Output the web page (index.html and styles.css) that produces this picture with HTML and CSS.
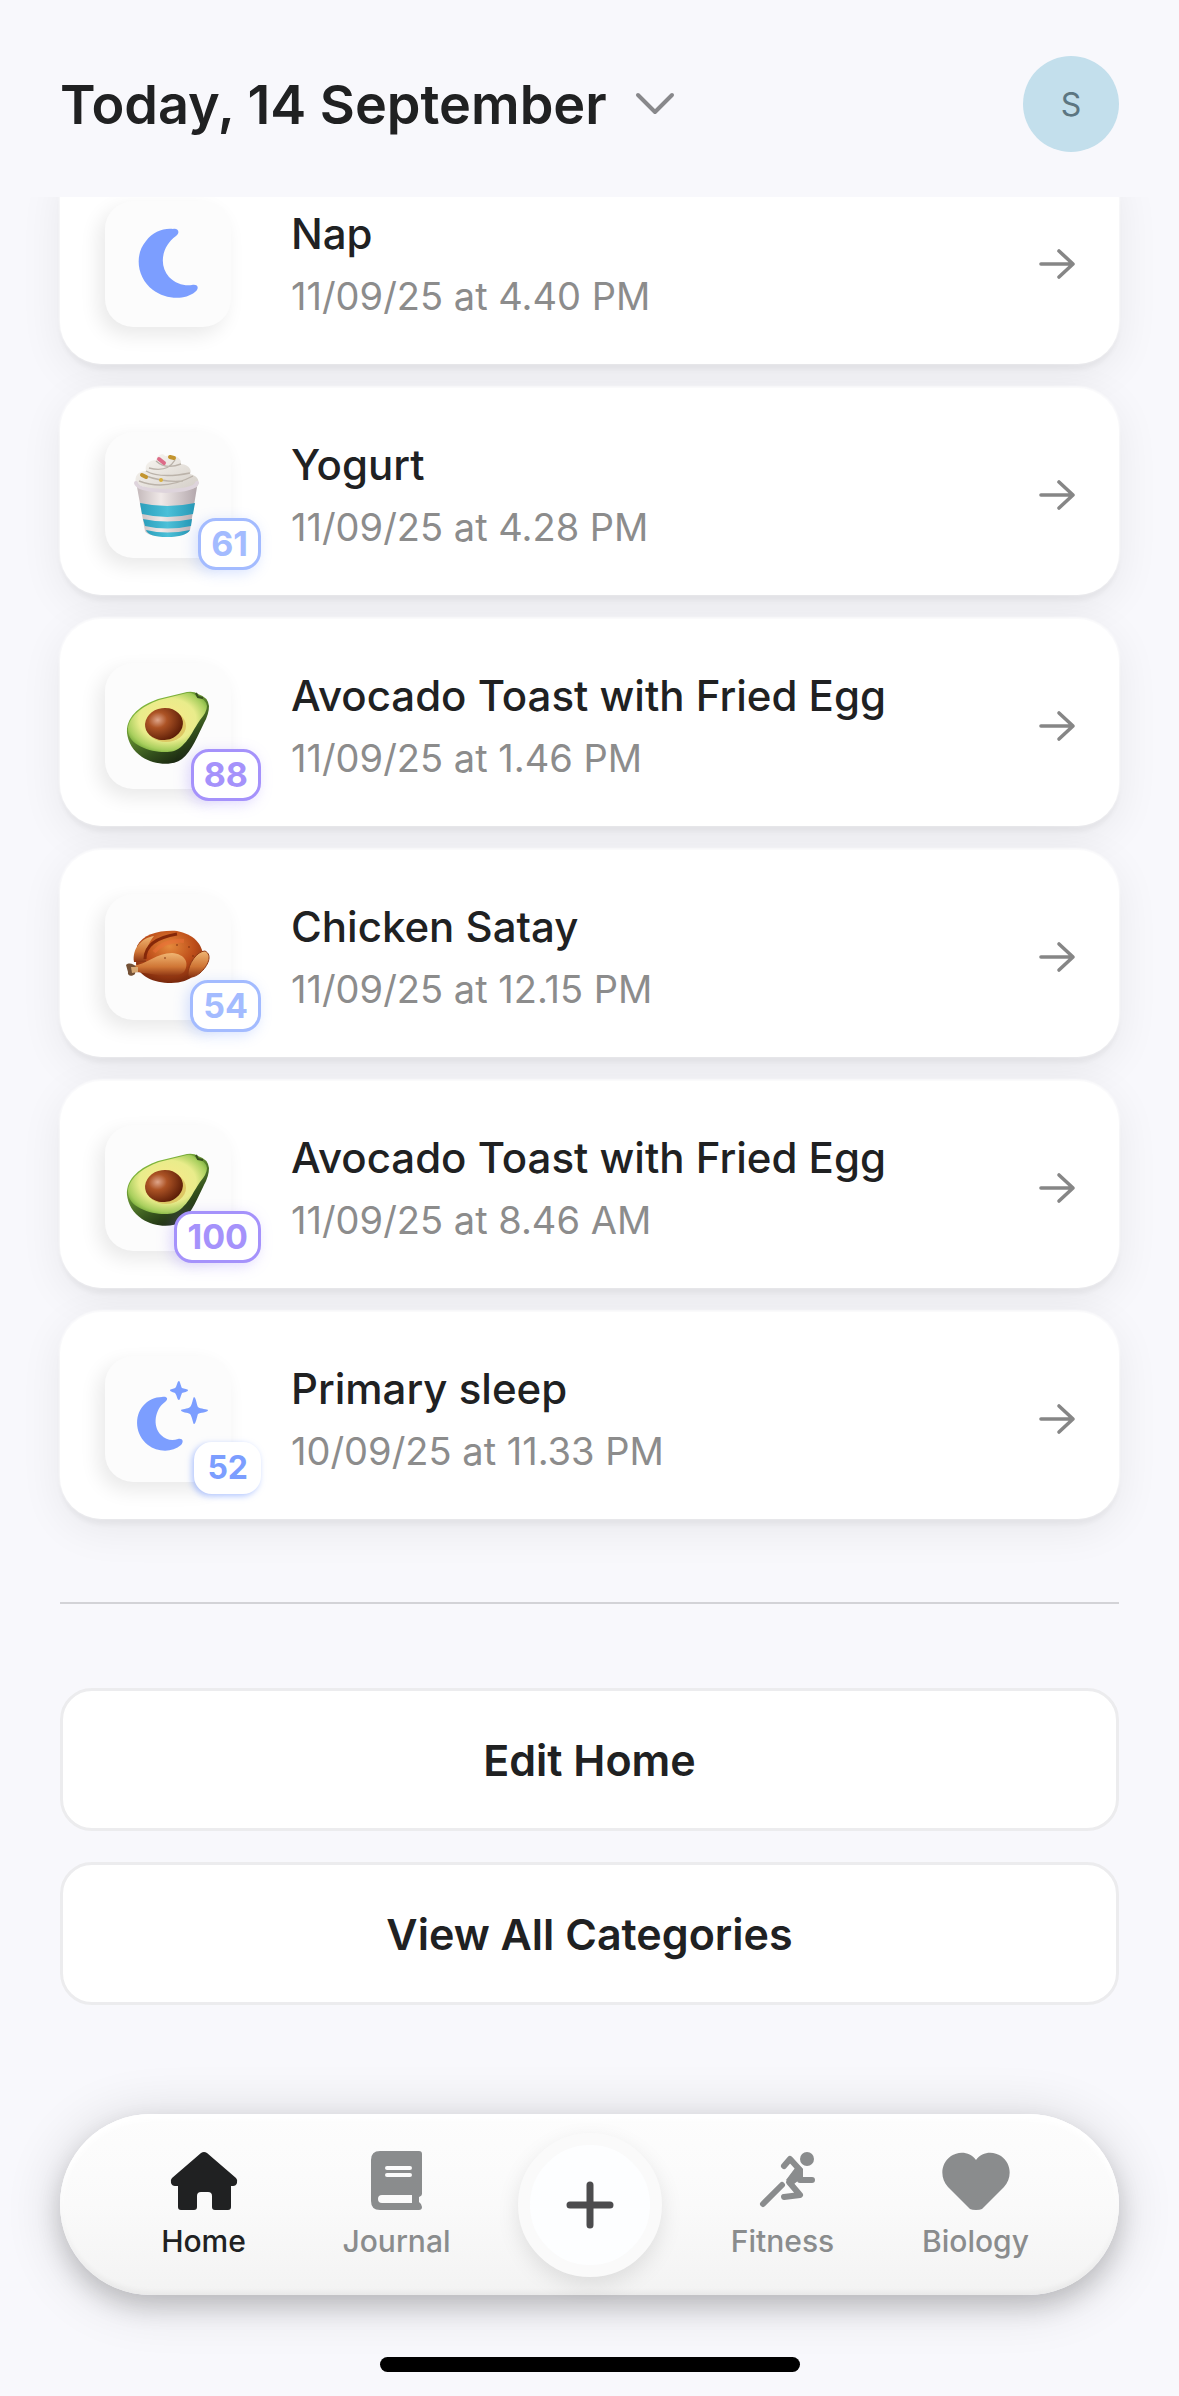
FILE: index.html
```html
<!DOCTYPE html>
<html lang="en">
<head>
    <meta charset="UTF-8">
    <meta name="viewport" content="width=device-width, initial-scale=1.0">
    <title>Home</title>
    <link rel="stylesheet" href="styles.css">
</head>
<body>

    <!-- shared gradients and icons -->
    <svg class="defs" width="0" height="0" aria-hidden="true">
        <defs>
            <radialGradient id="flesh" cx="0.5" cy="0.45" r="0.6">
                <stop offset="0" stop-color="#fbe88a"/>
                <stop offset="0.6" stop-color="#e9ec8b"/>
                <stop offset="0.85" stop-color="#a9cf5e"/>
                <stop offset="1" stop-color="#6fa535"/>
            </radialGradient>
            <linearGradient id="peel" x1="0.3" y1="0.2" x2="0.8" y2="1">
                <stop offset="0" stop-color="#7fb43c"/>
                <stop offset="0.6" stop-color="#33501c"/>
                <stop offset="1" stop-color="#10160c"/>
            </linearGradient>
            <radialGradient id="pit" cx="0.35" cy="0.35" r="0.7">
                <stop offset="0" stop-color="#dfa58a"/>
                <stop offset="0.35" stop-color="#ac5325"/>
                <stop offset="1" stop-color="#5b1c06"/>
            </radialGradient>
            <radialGradient id="roast" cx="0.5" cy="0.3" r="0.75">
                <stop offset="0" stop-color="#e58a3c"/>
                <stop offset="0.5" stop-color="#bd4d19"/>
                <stop offset="1" stop-color="#6d220a"/>
            </radialGradient>
            <linearGradient id="leg" x1="0" y1="0" x2="0" y2="1">
                <stop offset="0" stop-color="#f0b673"/>
                <stop offset="0.6" stop-color="#cf7535"/>
                <stop offset="1" stop-color="#8c3412"/>
            </linearGradient>
            <linearGradient id="cup" x1="0" y1="0" x2="1" y2="0">
                <stop offset="0" stop-color="#c4b9bb"/>
                <stop offset="0.4" stop-color="#f0e9e8"/>
                <stop offset="1" stop-color="#b3a7ac"/>
            </linearGradient>
            <linearGradient id="stripe" x1="0" y1="0" x2="1" y2="0">
                <stop offset="0" stop-color="#2c9fbc"/>
                <stop offset="0.5" stop-color="#4cc0d8"/>
                <stop offset="1" stop-color="#2798b6"/>
            </linearGradient>
            <linearGradient id="cream" x1="0" y1="0" x2="1" y2="1">
                <stop offset="0" stop-color="#fbf9f5"/>
                <stop offset="1" stop-color="#d3cdc6"/>
            </linearGradient>

            <symbol id="avocado" viewBox="0 0 126 126">
                <path d="M22 70C21 53 36 42 53 36L82 29Q89 28 93 31Q103 34 104 43Q104 51 99 60C93 72 87 88 77 96C66 104 48 101 37 94C28 88 23 79 22 70Z" fill="url(#peel)"/>
                <path d="M23 67C23 54 37 43 54 37L82 30Q88 29 92 34Q101 36 102 43Q102 49 95 57C88 67 82 83 69 88C55 92 23 85 23 67Z" fill="url(#flesh)"/>
                <path d="M91 30L93 34L98 35" fill="none" stroke="#38501d" stroke-width="2"/>
                <ellipse cx="61" cy="63" rx="20" ry="16" fill="#d3b04b" opacity="0.6"/>
                <ellipse cx="59" cy="61" rx="19" ry="16" transform="rotate(-8 59 61)" fill="url(#pit)"/>
            </symbol>

            <symbol id="chicken" viewBox="0 0 126 126">
                <path d="M32 52C38 40 55 36 72 37C88 40 98 50 98 63C98 77 86 89 66 89C48 89 34 82 31 70Z" fill="url(#roast)"/>
                <path d="M29 68C27 55 36 44 49 42C43 49 40 59 41 68Z" fill="url(#leg)"/>
                <path d="M40 65C40 50 54 43 72 40" fill="none" stroke="#852809" stroke-width="3"/>
                <path d="M49 58C56 50 67 46 79 47" fill="none" stroke="#ee6d37" stroke-width="4" opacity="0.5"/>
                <path d="M83 80C83 70 92 57 100 57C108 61 103 72 95 79C90 83 84 85 83 80Z" fill="url(#leg)" stroke="#8f3713" stroke-width="1"/>
                <path d="M28 72C42 70 52 59 67 59C80 60 85 69 79 78C68 87 49 79 29 78Z" fill="url(#leg)"/>
                <path d="M21 71C24 68 29 70 31 73L30 80C27 83 22 82 23 78Z" fill="#745136"/>
                <path d="M26 73L33 73L33 78L27 79Z" fill="#d6a874"/>
                <g fill="#7c2c0d" opacity="0.6">
                    <circle cx="72" cy="51" r="1"/>
                    <circle cx="84" cy="53" r="1"/>
                    <circle cx="60" cy="64" r="1"/>
                    <circle cx="88" cy="62" r="1"/>
                </g>
            </symbol>

            <symbol id="yogurt" viewBox="0 0 126 126">
                <path d="M32 55L40 99Q42 104 61 105Q82 104 85 98L92 55Z" fill="url(#cup)"/>
                <path d="M35 71Q62 77 90 71L88 82Q62 88 37 82Z" fill="url(#stripe)"/>
                <path d="M38 87Q62 92 87 87L86 94Q62 99 40 94Z" fill="url(#stripe)"/>
                <path d="M41 98Q62 103 85 98Q81 105 62 105Q43 105 41 98Z" fill="url(#stripe)"/>
                <path d="M31 52C29 44 33 39 41 39C39 32 45 28 51 28C52 23 58 20 60 24C70 22 77 26 76 32C85 33 87 39 85 42C94 44 95 50 92 55Q61 65 31 52Z" fill="url(#cream)"/>
                <path d="M51 29Q61 38 76 32M41 39Q55 47 85 41M34 49Q60 59 88 44M44 36Q62 41 70 28M38 43Q60 51 78 49" fill="none" stroke="#bbb3aa" stroke-width="1.4"/>
                <path d="M31 51Q32 58 61 59Q90 58 92 51" fill="none" stroke="#ded4dc" stroke-width="4" stroke-linecap="round"/>
                <path d="M54 27L59 31" stroke="#dd6b88" stroke-width="4" stroke-linecap="round"/>
                <path d="M65 25L69 26M37 43L41 45" stroke="#c3952f" stroke-width="4" stroke-linecap="round"/>
                <circle cx="56" cy="48" r="2" fill="#d9b03d"/>
            </symbol>

            <symbol id="arrow" viewBox="0 0 40 40">
                <path d="M4 20H35M22 7L36 20L22 33" fill="none" stroke="#868686" stroke-width="3.6" stroke-linecap="round" stroke-linejoin="round"/>
            </symbol>
        </defs>
    </svg>

    <header class="header">
        <button class="date-button">
            Today, 14 September
            <svg class="chevron" viewBox="0 0 40 24" aria-hidden="true">
                <path d="M3 3L20 20L37 3" fill="none" stroke="#88888b" stroke-width="4" stroke-linecap="round" stroke-linejoin="round"/>
            </svg>
        </button>
        <button class="avatar">S</button>
    </header>

    <main class="content">
        <div class="feed">
            <a class="card" href="#">
                <span class="tile">
                    <svg viewBox="0 0 126 126" aria-hidden="true">
                        <path d="M68 28C74 27 75 32 71 35C56 46 54 65 64 76C71 83 79 85 87 84C94 83 94 88 90 91C79 100 60 98 48 89C32 77 29 54 41 40C48 31 58 27 68 28Z" fill="#7c9eff"/>
                    </svg>
                </span>
                <span class="info">
                    <span class="name">Nap</span>
                    <span class="time">11/09/25 at 4.40 PM</span>
                </span>
                <svg class="arrow" aria-hidden="true"><use href="#arrow"/></svg>
            </a>
            <a class="card" href="#">
                <span class="tile">
                    <svg aria-hidden="true"><use href="#yogurt"/></svg>
                    <span class="badge blue">61</span>
                </span>
                <span class="info">
                    <span class="name">Yogurt</span>
                    <span class="time">11/09/25 at 4.28 PM</span>
                </span>
                <svg class="arrow" aria-hidden="true"><use href="#arrow"/></svg>
            </a>
            <a class="card" href="#">
                <span class="tile">
                    <svg aria-hidden="true"><use href="#avocado"/></svg>
                    <span class="badge purple">88</span>
                </span>
                <span class="info">
                    <span class="name">Avocado Toast with Fried Egg</span>
                    <span class="time">11/09/25 at 1.46 PM</span>
                </span>
                <svg class="arrow" aria-hidden="true"><use href="#arrow"/></svg>
            </a>
            <a class="card" href="#">
                <span class="tile">
                    <svg aria-hidden="true"><use href="#chicken"/></svg>
                    <span class="badge blue">54</span>
                </span>
                <span class="info">
                    <span class="name">Chicken Satay</span>
                    <span class="time">11/09/25 at 12.15 PM</span>
                </span>
                <svg class="arrow" aria-hidden="true"><use href="#arrow"/></svg>
            </a>
            <a class="card" href="#">
                <span class="tile">
                    <svg aria-hidden="true"><use href="#avocado"/></svg>
                    <span class="badge purple">100</span>
                </span>
                <span class="info">
                    <span class="name">Avocado Toast with Fried Egg</span>
                    <span class="time">11/09/25 at 8.46 AM</span>
                </span>
                <svg class="arrow" aria-hidden="true"><use href="#arrow"/></svg>
            </a>
            <a class="card" href="#">
                <span class="tile">
                    <svg viewBox="0 0 126 126" aria-hidden="true">
                        <g fill="#7c9eff">
                            <path d="M57 41C62 40 64 43 60 46C50 53 47 70 56 79C61 84 67 85 73 83C78 82 79 86 76 89C67 97 52 96 43 89C30 79 29 60 38 50C43 44 50 41 57 41Z"/>
                            <path d="M74 25C75 25 76 31 77 32C79 33 83 33 83 34C83 36 79 36 77 37C76 39 75 44 74 44C72 44 72 39 70 37C69 36 65 36 65 34C65 33 69 33 70 32C72 31 72 25 74 25Z"/>
                            <path d="M89 41C91 41 92 50 93 51C95 53 103 53 103 54C103 57 95 56 93 58C92 60 91 68 89 68C88 68 87 60 85 58C83 56 76 57 76 54C76 53 83 53 85 51C87 50 88 41 89 41Z"/>
                        </g>
                    </svg>
                    <span class="badge plain">52</span>
                </span>
                <span class="info">
                    <span class="name">Primary sleep</span>
                    <span class="time">10/09/25 at 11.33 PM</span>
                </span>
                <svg class="arrow" aria-hidden="true"><use href="#arrow"/></svg>
            </a>
        </div>

        <hr class="divider">

        <div class="actions">
            <button class="action">Edit Home</button>
            <button class="action">View All Categories</button>
        </div>
    </main>

    <footer class="footer">
        <nav class="nav">
            <a class="nav-item active" href="#">
                <svg viewBox="0 0 68 60" aria-hidden="true">
                    <path d="M31 2Q34 0 37 2L66 27Q68 29 67 32Q66 35 63 35H61V56Q61 59 58 59H45Q42 59 42 56V45Q42 41 38 41H31Q27 41 27 45V56Q27 59 24 59H11Q8 59 8 56V35H5Q2 35 1 32Q0 29 2 27Z" fill="currentColor"/>
                </svg>
                Home
            </a>
            <a class="nav-item" href="#">
                <svg viewBox="0 0 68 60" aria-hidden="true">
                    <path fill-rule="evenodd" d="M17 0H56Q59 0 59 3V43Q59 45 56 46V51Q59 53 59 56Q59 59 56 59H17Q8 59 8 50V9Q8 0 17 0ZM24 15Q22 15 22 17Q22 19 24 19H47Q49 19 49 17Q49 15 47 15ZM24 22Q22 22 22 24Q22 26 24 26H47Q49 26 49 24Q49 22 47 22ZM19 44Q15 44 15 48Q15 52 19 52H49V44Z" fill="currentColor"/>
                </svg>
                Journal
            </a>
            <button class="add" aria-label="Add">
                <svg viewBox="0 0 48 48" aria-hidden="true">
                    <path d="M24 4V44M4 24H44" fill="none" stroke="#4c4c4e" stroke-width="7" stroke-linecap="round"/>
                </svg>
            </button>
            <a class="nav-item" href="#">
                <svg viewBox="0 0 68 60" aria-hidden="true">
                    <circle cx="58" cy="8" r="7" fill="currentColor"/>
                    <g fill="none" stroke="currentColor" stroke-width="6" stroke-linecap="round" stroke-linejoin="round">
                        <path d="M35 15L41 8L51 19V29L63 29"/>
                        <path d="M46 23L40 31L51 44L35 46"/>
                        <path d="M14 53L33 34"/>
                    </g>
                    <path d="M41 7L54 18V26L45 33L37 29L46 17Z" fill="currentColor"/>
                </svg>
                Fitness
            </a>
            <a class="nav-item" href="#">
                <svg viewBox="0 0 68 60" aria-hidden="true">
                    <path d="M34 9C40 0 52 0 59 5C70 13 70 27 62 36L40 58Q38 59 34 59Q30 59 28 58L6 36C-2 27 -2 13 9 5C16 0 28 0 34 9Z" fill="currentColor"/>
                </svg>
                Biology
            </a>
        </nav>
        <div class="home-indicator"></div>
    </footer>

</body>
</html>
```
FILE: styles.css
```css
* {
    box-sizing: border-box;
}
body {
    display: flex;
    flex-direction: column;
    min-height: 100vh;
    margin: 0;
    background-color: #f8f8fc;
    color: #202122;
    font-family: Inter, "Liberation Sans", sans-serif;
}
button {
    border: none;
    color: inherit;
    font-family: inherit;
    cursor: pointer;
}
a {
    color: inherit;
    text-decoration: none;
}
.defs {
    position: absolute;
}
.header {
    position: sticky;
    top: 0;
    z-index: 2;
    display: flex;
    align-items: center;
    justify-content: space-between;
    padding: 56px 60px 45px;
    background-color: #f8f8fc;
}
.date-button {
    display: flex;
    align-items: center;
    gap: 28px;
    padding: 0;
    background: none;
    font-size: 54px;
    font-weight: 600;
}
.chevron {
    width: 40px;
    height: 24px;
}
.avatar {
    width: 96px;
    height: 96px;
    padding: 0;
    border-radius: 50%;
    background-color: #c3dfec;
    color: #5c7681;
    font-size: 32px;
}
.content {
    padding: 0 60px;
}
.feed {
    display: flex;
    flex-direction: column;
    gap: 24px;
    margin-top: -40px;
}
.card {
    display: flex;
    align-items: center;
    height: 207px;
    padding: 6px 42px 0 45px;
    border-radius: 42px;
    background-color: #fff;
    box-shadow: 0 -1px 2px 1px rgba(255, 255, 255, 0.7),
                0 6px 4px rgba(0, 0, 0, 0.04),
                0 10px 44px rgba(0, 0, 0, 0.07);
}
.tile {
    position: relative;
    flex: none;
    width: 126px;
    height: 126px;
    border-radius: 28px;
    background-color: #fcfcfc;
    box-shadow: -6px 8px 20px rgba(0, 0, 0, 0.09);
}
.tile svg {
    display: block;
    width: 126px;
    height: 126px;
}
.badge {
    position: absolute;
    right: -30px;
    bottom: -12px;
    height: 52px;
    padding: 0 10px;
    border: 3px solid;
    border-radius: 18px;
    background-color: #fff;
    font-size: 34px;
    font-weight: 700;
    line-height: 46px;
}
.blue {
    color: #a3bbff;
    box-shadow: -3px 3px 14px rgba(124, 158, 255, 0.3);
}
.purple {
    color: #a592fb;
    box-shadow: -3px 3px 14px rgba(165, 146, 251, 0.35);
}
.plain {
    border-color: #fff;
    color: #7c9eff;
    font-size: 32px;
    box-shadow: -2px 2px 6px rgba(124, 158, 255, 0.6);
}
.info {
    display: flex;
    flex: 1;
    flex-direction: column;
    gap: 12px;
    padding-left: 60px;
}
.name {
    font-size: 42px;
    font-weight: 500;
    line-height: 52px;
}
.time {
    color: #8c8c8c;
    font-size: 38px;
    line-height: 48px;
}
.arrow {
    width: 40px;
    height: 40px;
}
.divider {
    width: 100%;
    height: 2px;
    margin: 83px 0 84px;
    border: none;
    background-color: #d3d3d7;
}
.actions {
    display: flex;
    flex-direction: column;
    gap: 31px;
}
.action {
    height: 143px;
    border: 3px solid #ececee;
    border-radius: 32px;
    background-color: #fff;
    font-size: 43px;
    font-weight: 600;
}
.footer {
    margin-top: auto;
    padding: 100px 60px 24px;
}
.nav {
    display: grid;
    grid-template-columns: repeat(5, 1fr);
    align-items: center;
    height: 181px;
    padding: 0 47px;
    border-radius: 91px;
    background: linear-gradient(#fdfdfd, #fafafa 50%, #f3f3f3);
    box-shadow: inset 0 6px 6px #fff,
                inset 0 -4px 5px rgba(0, 0, 0, 0.04),
                0 12px 24px rgba(0, 0, 0, 0.16),
                0 6px 56px rgba(0, 0, 0, 0.16);
}
.nav-item {
    display: flex;
    flex-direction: column;
    align-items: center;
    gap: 12px;
    color: #8a8c8d;
    font-size: 30px;
    font-weight: 500;
    line-height: 36px;
}
.nav-item svg {
    width: 68px;
    height: 60px;
}
.active {
    color: #202122;
}
.add {
    display: flex;
    align-items: center;
    justify-content: center;
    justify-self: center;
    width: 144px;
    height: 144px;
    padding: 0;
    border: 12px solid #fafafa;
    border-radius: 50%;
    background-color: #fdfeff;
    box-shadow: 0 8px 22px rgba(0, 0, 0, 0.1);
}
.add svg {
    width: 48px;
    height: 48px;
}
.home-indicator {
    width: 420px;
    height: 15px;
    margin: 62px auto 0;
    border-radius: 8px;
    background-color: #000;
}
```
